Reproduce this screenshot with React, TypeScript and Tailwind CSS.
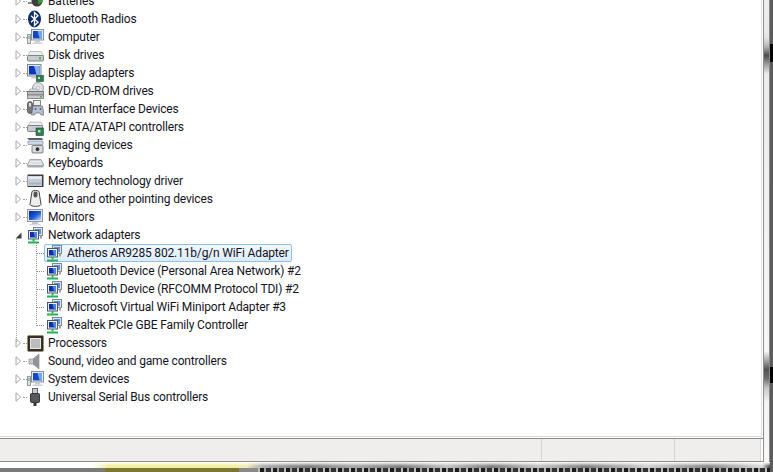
import React from "react";

const Monitor = () => (
  <svg width="17" height="17" viewBox="0 0 17 17">
    <defs>
      <linearGradient id="scr" x1="0" y1="0" x2="1" y2="1">
        <stop offset="0" stopColor="#061f9a" />
        <stop offset="0.55" stopColor="#1f5fd8" />
        <stop offset="1" stopColor="#c4e0fb" />
      </linearGradient>
    </defs>
    <rect x="0.5" y="0.5" width="15" height="12" fill="#e2e5ea" stroke="#9098a2" />
    <rect x="2" y="2" width="12" height="9" fill="url(#scr)" />
    <path d="M5.5 13h5l1 2h-7z" fill="#c4c8cc" />
    <rect x="2.5" y="15" width="11" height="1.5" fill="#d8dade" />
  </svg>
);

const Net = () => (
  <svg width="17" height="17" viewBox="0 0 17 17">
    <rect x="6.5" y="0.5" width="9" height="8" fill="#dfe4ea" stroke="#7d8794" />
    <rect x="8" y="2" width="6" height="5" fill="#5b90dc" />
    <rect x="1.5" y="3.5" width="10" height="8.5" fill="#eceff3" stroke="#4f5762" />
    <rect x="3" y="5" width="7" height="5.5" fill="#0c2fa8" />
    <path d="M6.5 5H10v5.5H8z" fill="#4a86e4" />
    <rect x="13" y="8.5" width="2" height="3" fill="#9aa2ac" />
    <rect x="5.5" y="12" width="2" height="2.5" fill="#2fb25a" />
    <rect x="1" y="14.5" width="11" height="2" fill="#1fb455" />
  </svg>
);

const Bluetooth = () => (
  <svg width="16" height="18" viewBox="0 0 16 18">
    <ellipse cx="7.5" cy="9" rx="6.5" ry="8.5" fill="#0b2f6b" />
    <path d="M4 5.8l7 6.4-3.5 3.3V2.5L11 5.8l-7 6.4" fill="none" stroke="#fff" strokeWidth="1.3" />
  </svg>
);

const Battery = () => (
  <svg width="17" height="16" viewBox="0 0 17 16">
    <rect x="1" y="5" width="6" height="2" fill="#555" />
    <rect x="1" y="9" width="6" height="2" fill="#888" />
    <circle cx="10" cy="8" r="5.5" fill="#3f3f3f" />
    <path d="M10 2.5l6 1v5l-4.5 3z" fill="#3c9a3c" />
  </svg>
);

const Computer = () => (
  <svg width="17" height="16" viewBox="0 0 17 16">
    <rect x="0.5" y="5.5" width="3" height="9" fill="#dfe3e8" stroke="#999" />
    <rect x="1.5" y="7" width="1" height="3" fill="#36b24d" />
    <rect x="4.5" y="0.5" width="12" height="10.5" fill="#e6e9ee" stroke="#8a9098" />
    <rect x="6" y="2" width="9" height="7.5" fill="#1546c4" />
    <path d="M10.5 2H15v7.5h-2.5z" fill="#6ea8ee" />
    <path d="M8.5 11.5h4l1 2h-6z" fill="#c4c8cc" />
    <rect x="5.5" y="13.5" width="10" height="1.5" fill="#cfd2d6" />
  </svg>
);

const Disk = () => (
  <svg width="17" height="16" viewBox="0 0 17 16">
    <path d="M3 4.5h11l2.3 4H.7z" fill="#eceef0" stroke="#9a9fa4" strokeWidth="0.6" />
    <rect x="0.5" y="8.5" width="16" height="5.5" rx="1" fill="#c8ccd0" stroke="#7e8388" />
    <rect x="12" y="10" width="2" height="2.5" fill="#5ab04a" />
  </svg>
);

const Display = () => (
  <svg width="17" height="18" viewBox="0 0 17 18">
    <rect x="0.5" y="0.5" width="13.5" height="11.5" fill="#e6e9ee" stroke="#7d8794" />
    <rect x="2" y="2" width="10.5" height="8.5" fill="#0d35b8" />
    <path d="M7 2h5.5v8.5H9.5z" fill="#7fb2ee" />
    <path d="M5 12.5h5l1 2H4z" fill="#c4c8cc" />
    <rect x="9.5" y="11.5" width="7" height="6" fill="#2f7d52" stroke="#1d4f34" strokeWidth="0.6" />
    <rect x="11" y="13" width="2" height="2" fill="#bfe0b0" />
  </svg>
);

const Dvd = () => (
  <svg width="17" height="18" viewBox="0 0 17 18">
    <circle cx="11" cy="6" r="5.5" fill="#dcdfe4" stroke="#9a9fa4" />
    <circle cx="11" cy="6" r="1.5" fill="#fff" stroke="#999" strokeWidth="0.5" />
    <path d="M3 7h7l2 3H1z" fill="#d8dadd" stroke="#888" strokeWidth="0.5" />
    <rect x="0.5" y="9.5" width="16" height="3.5" fill="#b8bcc0" stroke="#666" strokeWidth="0.8" />
    <rect x="0.5" y="13" width="16" height="3.5" fill="#c8ccd0" stroke="#777" strokeWidth="0.8" />
    <rect x="13" y="14" width="2" height="1.5" fill="#5ab04a" />
  </svg>
);

const Hid = () => (
  <svg width="17" height="18" viewBox="0 0 17 18">
    <rect x="0.5" y="1.5" width="5" height="12" rx="2.5" fill="#777" stroke="#333" strokeWidth="0.6" />
    <rect x="2" y="3" width="2" height="3.5" fill="#ddd" />
    <rect x="6.5" y="0.5" width="7" height="5" fill="#eceef2" stroke="#888" />
    <path d="M6 6h9.5l1.5 9h-3l-1-2H8.5l-1 2H4.5z" fill="#b6c0cc" stroke="#556" strokeWidth="0.6" />
    <circle cx="8.5" cy="9" r="1" fill="#3a64c0" />
    <circle cx="13.5" cy="9" r="1" fill="#3a64c0" />
  </svg>
);

const Ide = () => (
  <svg width="17" height="17" viewBox="0 0 17 17">
    <path d="M3 3h11l2 4H1z" fill="#eceef0" stroke="#9a9fa4" strokeWidth="0.6" />
    <rect x="0.5" y="6.5" width="15" height="6" rx="1" fill="#c8ccd0" stroke="#7e8388" />
    <rect x="9" y="9" width="7.5" height="7.5" fill="#2f7d52" stroke="#1d4f34" strokeWidth="0.6" />
    <rect x="11" y="11" width="2.5" height="2.5" fill="#bfe0b0" />
  </svg>
);

const Imaging = () => (
  <svg width="17" height="17" viewBox="0 0 17 17">
    <path d="M0 1h15l1 2H2z" fill="#5a6068" />
    <path d="M1 4h15v3.5H1z" fill="#c9d8ea" stroke="#7d8794" strokeWidth="0.6" />
    <rect x="5" y="8.5" width="11" height="7.5" rx="1" fill="#d8dade" stroke="#555" strokeWidth="0.7" />
    <circle cx="10.5" cy="12.2" r="2.4" fill="#333" stroke="#eee" strokeWidth="0.8" />
  </svg>
);

const Keyboard = () => (
  <svg width="17" height="14" viewBox="0 0 17 14">
    <path d="M3 3.5h11l3 6H0z" fill="#d0d2d8" stroke="#8a8e94" strokeWidth="0.7" />
    <path d="M3 5.5h11M2.5 7h12M2 8.5h13" stroke="#fff" strokeWidth="0.9" strokeDasharray="1 0.6" />
    <rect x="0.5" y="9.5" width="16" height="2" fill="#a8acb2" />
  </svg>
);

const Memory = () => (
  <svg width="17" height="16" viewBox="0 0 17 16">
    <rect x="0.5" y="1.5" width="16" height="12.5" fill="#3a3e44" />
    <path d="M1 3h14v10H1z" fill="#c4ccd8" />
    <path d="M1.5 3.5h13v2.5h-13z" fill="#e8ecf2" />
    <rect x="2" y="9.5" width="12" height="2" fill="#aab4c0" />
  </svg>
);

const Mouse = () => (
  <svg width="17" height="18" viewBox="0 0 17 18">
    <path d="M5 1.5c2-1.5 5-1.5 7 0l2 13c-1 2.5-10 2.5-11 0z" fill="#eeeef0" stroke="#444" />
    <rect x="6.5" y="1.5" width="4" height="6" rx="2" fill="#555" />
  </svg>
);

const Cpu = () => (
  <svg width="17" height="17" viewBox="0 0 17 17">
    <rect x="0.5" y="0.5" width="16" height="16" rx="1" fill="#33302a" />
    <rect x="0.5" y="0.5" width="16" height="16" rx="1" fill="none" stroke="#a08a4a" strokeDasharray="1 1" />
    <rect x="3.5" y="3.5" width="10" height="10" fill="#bcbcbc" stroke="#e8e8e8" />
  </svg>
);

const Speaker = () => (
  <svg width="17" height="17" viewBox="0 0 17 17">
    <path d="M2 6h4l6-5v15l-6-5H2z" fill="#c4c8cc" stroke="#8c9096" strokeWidth="0.7" />
    <path d="M6 6l6-5v15l-6-5z" fill="#8f949a" />
  </svg>
);

const Usb = () => (
  <svg width="17" height="18" viewBox="0 0 17 18">
    <rect x="5.5" y="0.5" width="5" height="5" fill="#c8ccd0" stroke="#666" />
    <rect x="3.5" y="5.5" width="9" height="9" rx="1" fill="#55585c" stroke="#333" />
    <rect x="6.5" y="14.5" width="3" height="3.5" fill="#333" />
  </svg>
);

const Expander = ({ open = false }: { open?: boolean }) =>
  open ? (
    <svg width="7" height="7" viewBox="0 0 7 7" className="shrink-0">
      <path d="M6.5 0.5v6h-6z" fill="#404040" />
    </svg>
  ) : (
    <svg width="7" height="10" viewBox="0 0 7 10" className="shrink-0">
      <path d="M1 0.8l4.6 4.2L1 9.2z" fill="#fff" stroke="#a6a6a6" />
    </svg>
  );

const Row = ({ icon, label, open = false }: { icon: React.ReactNode; label: string; open?: boolean }) => (
  <div className="flex h-[18px] items-center">
    <div className="ml-[14px] flex w-[8px] justify-center">
      <Expander open={open} />
    </div>
    <div className={open ? "w-[5px]" : "ml-[1px] w-[4px] border-t border-dotted border-[#a0a0a0]"} />
    <div className="flex w-[21px] justify-start">{icon}</div>
    <span>{label}</span>
  </div>
);

const Child = ({ label, selected = false }: { label: string; selected?: boolean }) => (
  <div className="flex h-[18px] items-center">
    <div className="ml-[36px] w-[8px] border-t border-dotted border-[#909090]" />
    <div
      className={
        selected
          ? "flex h-[18px] items-center rounded-[2px] border border-[#8fc0ea] bg-[linear-gradient(#f2f8fe,#dcecfb)] pl-[1px] pr-[2px]"
          : "flex h-[18px] items-center pl-[2px] pr-[3px]"
      }
    >
      <div className="w-[21px]">
        <Net />
      </div>
      <span>{label}</span>
    </div>
  </div>
);

const before: [React.ReactNode, string][] = [
  [<Battery />, "Batteries"],
  [<Bluetooth />, "Bluetooth Radios"],
  [<Computer />, "Computer"],
  [<Disk />, "Disk drives"],
  [<Display />, "Display adapters"],
  [<Dvd />, "DVD/CD-ROM drives"],
  [<Hid />, "Human Interface Devices"],
  [<Ide />, "IDE ATA/ATAPI controllers"],
  [<Imaging />, "Imaging devices"],
  [<Keyboard />, "Keyboards"],
  [<Memory />, "Memory technology driver"],
  [<Mouse />, "Mice and other pointing devices"],
  [<Monitor />, "Monitors"],
];

const after: [React.ReactNode, string][] = [
  [<Cpu />, "Processors"],
  [<Speaker />, "Sound, video and game controllers"],
  [<Computer />, "System devices"],
  [<Usb />, "Universal Serial Bus controllers"],
];

export default function App() {
  return (
    <div className="flex h-[472px] w-[773px] overflow-hidden bg-[#5c5c5c] font-['Roboto',sans-serif] text-[12px] tracking-[-0.16px] text-[#14141e]">
      <div className="flex w-[770px] flex-col">
        <div className="flex h-[462px] shrink-0">
          <div className="flex w-[764px] flex-col border-r border-[#8e8e8e] bg-white">
            <div className="mr-[1px] min-h-0 flex-1 overflow-hidden border-r border-[#e2e2e2]">
              <div className="-mt-[8px]">
                {before.map(([icon, label]) => (
                  <Row key={label} icon={icon} label={label} />
                ))}
                <Row icon={<Net />} label="Network adapters" open />
                <div className="relative">
                  <div className="absolute -top-[1px] bottom-[8px] left-[36px] border-l border-dotted border-[#909090]" />
                  <div className="absolute -top-[5px] bottom-[-8px] left-[16px] border-l border-dotted border-[#a0a0a0]" />
                  <Child label="Atheros AR9285 802.11b/g/n WiFi Adapter" selected />
                  <Child label="Bluetooth Device (Personal Area Network) #2" />
                  <Child label="Bluetooth Device (RFCOMM Protocol TDI) #2" />
                  <Child label="Microsoft Virtual WiFi Miniport Adapter #3" />
                  <Child label="Realtek PCIe GBE Family Controller" />
                </div>
                {after.map(([icon, label]) => (
                  <Row key={label} icon={icon} label={label} />
                ))}
              </div>
            </div>
            <div className="mr-[1px] h-[2px] shrink-0 border-r border-t border-[#d8dcd8]" />
            <div className="flex h-[24px] shrink-0 border-y border-[#8e8e8e] bg-white">
              <div className="w-[542px] border-r border-[#d4d4d4] bg-[#f0eded]" />
              <div className="w-[133px] border-r border-[#d4d4d4] bg-[#f0eded]" />
              <div className="w-[86px] border-r border-[#d4d4d4] bg-[#f0eded]" />
            </div>
          </div>
          <div className="w-[5px] bg-[linear-gradient(#efefef_0%,#e8e8e8_8%,#b8b8b8_10%,#4c4c4c_12%,#a0a0a0_14%,#ececec_16%,#f6f6f6_76%,#a8a8a8_78%,#505050_80%,#707070_82%,#c8c8c8_84%,#f4f4f4_87%,#f8f8f8_100%)]" />
          <div className="w-px bg-[#8a8a8a]" />
        </div>
        <div className="h-[6px] shrink-0 bg-[linear-gradient(#ffffff_0%,rgba(255,255,255,0)_70%),linear-gradient(90deg,#ffffff_0%,#ffffff_12%,#f3ee9c_14%,#f3ee9c_30%,#f0ecb0_32%,#b0b0b0_34%,#7c7c7c_40%,#a8a8a8_46%,#808080_52%,#c0c0c0_58%,#7e7e7e_64%,#c4c4c4_70%,#808080_76%,#d0d0d0_84%,#888888_92%,#dcdcdc_99%,#444444_100%)]" />
        <div className="h-[4px] shrink-0 bg-[linear-gradient(90deg,#7a7a7a_0%,#7a7a7a_13.6%,#7c7630_13.6%,#7c7630_31%,#8a8a8a_31%,#8a8a8a_33.5%,rgba(0,0,0,0)_33.5%),repeating-linear-gradient(90deg,#1a1a1a_0px,#1a1a1a_4px,#a0a0a0_4px,#a0a0a0_6px,#303030_6px,#303030_11px,#bcbcbc_11px,#bcbcbc_13px)]" />
      </div>
      <div className="flex w-[3px] flex-col bg-[linear-gradient(#5c5c5c_0%,#5c5c5c_9.3%,#000000_9.3%,#000000_13.2%,#5c5c5c_13.2%,#5c5c5c_77.8%,#000000_77.8%,#000000_81.2%,#5c5c5c_81.2%,#5c5c5c_100%)]" />
    </div>
  );
}
